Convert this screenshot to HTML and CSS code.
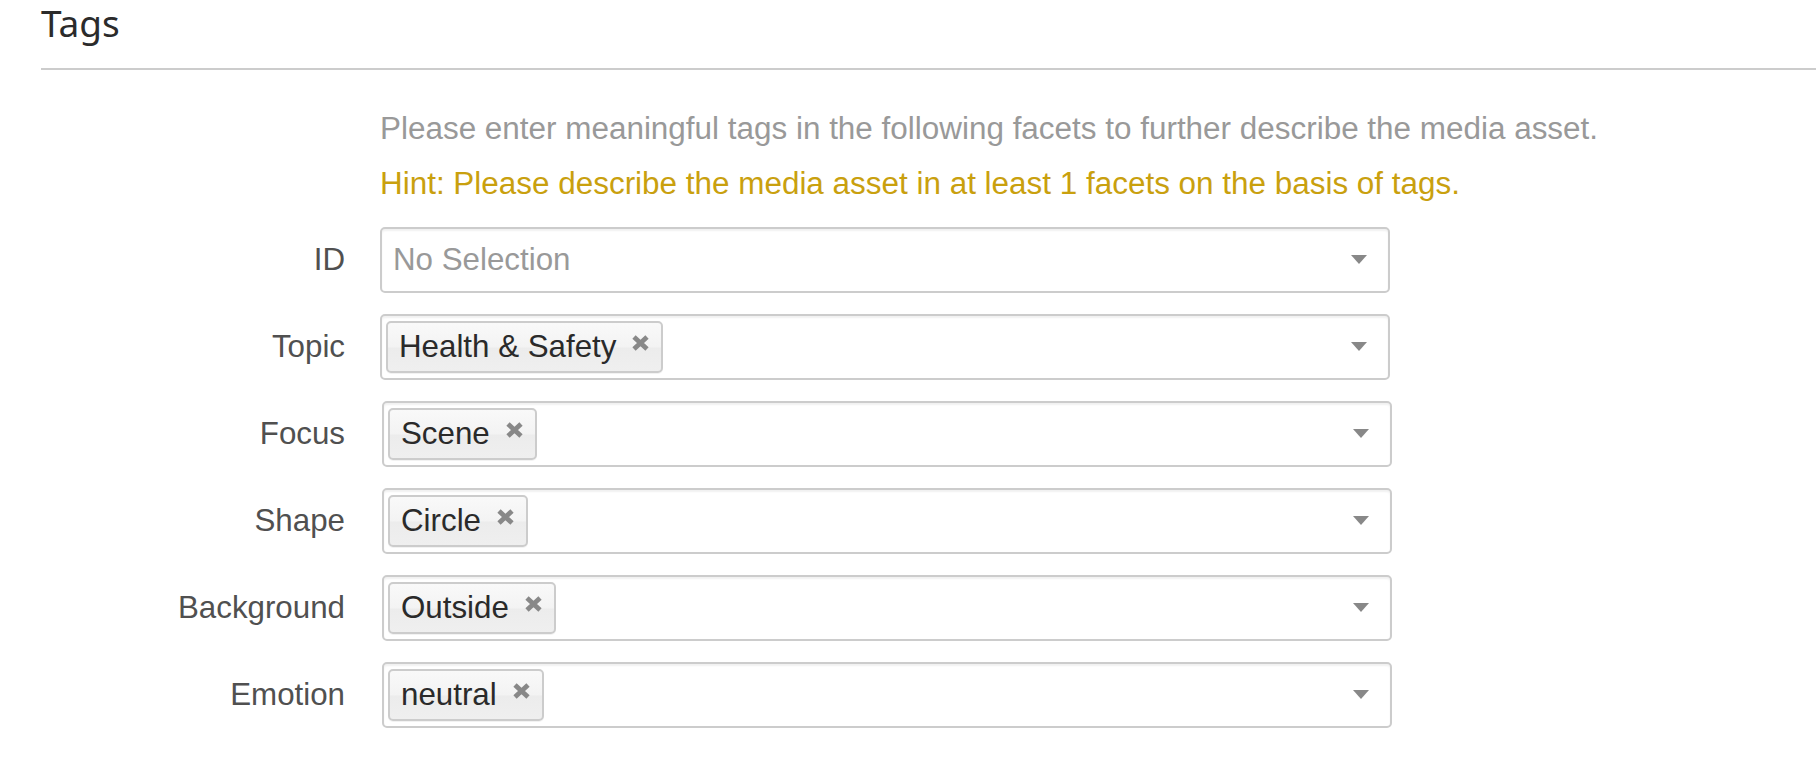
FILE: index.html
```html
<!DOCTYPE html>
<html lang="en">
<head>
<meta charset="utf-8">
<title>Tags</title>
<link rel="stylesheet" href="styles.css">
</head>
<body>
<div class="page">
  <div class="section-title">Tags</div>
  <div class="form">
    <p class="intro">Please enter meaningful tags in the following facets to further describe the media asset.</p>
    <p class="hint">Hint: Please describe the media asset in at least 1 facets on the basis of tags.</p>

    <div class="row">
      <label class="lbl">ID</label>
      <div class="sel">
        <span class="placeholder">No Selection</span>
        <span class="caret"></span>
      </div>
    </div>

    <div class="row">
      <label class="lbl">Topic</label>
      <div class="sel">
        <span class="tag">Health &amp; Safety<svg class="x" viewBox="0 0 17 16" width="17" height="16"><path d="M2 2 L15 14 M15 2 L2 14"/></svg></span>
        <span class="caret"></span>
      </div>
    </div>

    <div class="row">
      <label class="lbl">Focus</label>
      <div class="sel shift">
        <span class="tag">Scene<svg class="x" viewBox="0 0 17 16" width="17" height="16"><path d="M2 2 L15 14 M15 2 L2 14"/></svg></span>
        <span class="caret"></span>
      </div>
    </div>

    <div class="row">
      <label class="lbl">Shape</label>
      <div class="sel shift">
        <span class="tag">Circle<svg class="x" viewBox="0 0 17 16" width="17" height="16"><path d="M2 2 L15 14 M15 2 L2 14"/></svg></span>
        <span class="caret"></span>
      </div>
    </div>

    <div class="row">
      <label class="lbl">Background</label>
      <div class="sel shift">
        <span class="tag">Outside<svg class="x" viewBox="0 0 17 16" width="17" height="16"><path d="M2 2 L15 14 M15 2 L2 14"/></svg></span>
        <span class="caret"></span>
      </div>
    </div>

    <div class="row">
      <label class="lbl">Emotion</label>
      <div class="sel shift">
        <span class="tag">neutral<svg class="x" viewBox="0 0 17 16" width="17" height="16"><path d="M2 2 L15 14 M15 2 L2 14"/></svg></span>
        <span class="caret"></span>
      </div>
    </div>
  </div>
</div>
</body>
</html>
```

FILE: styles.css
```css
html, body {
  margin: 0;
  padding: 0;
  background: #ffffff;
}

body {
  font-family: "Liberation Sans", Arial, sans-serif;
  font-size: 31.3px;
  color: #333333;
  overflow: hidden;
}

.page {
  padding-left: 41px;
}

.section-title {
  font-family: "Noto Sans", "Open Sans", sans-serif;
  font-size: 37px;
  line-height: 44px;
  color: #2b2b2b;
  padding: 1px 0 23px 0;
  border-bottom: 2px solid #cccccc;
}

.form {
  padding-top: 31px;
}

.intro,
.hint {
  margin: 0;
  padding-left: 339px;
  font-size: 31.45px;
  line-height: 55.3px;
  white-space: nowrap;
}

.intro {
  color: #999999;
}

.hint {
  color: #c9a00e;
}

.row {
  display: flex;
  align-items: center;
  gap: 35px;
  margin-top: 21px;
}

.hint + .row {
  margin-top: 15px;
}

.lbl {
  width: 304px;
  text-align: right;
  color: #505050;
  flex: none;
}

.sel {
  box-sizing: border-box;
  width: 1010px;
  height: 66px;
  border: 2px solid #cccccc;
  border-radius: 5px;
  box-shadow: inset 0 2px 2px rgba(0, 0, 0, 0.06);
  display: flex;
  align-items: center;
  background: #ffffff;
}

.sel.shift {
  margin-left: 2px;
}

.placeholder {
  color: #999999;
  padding-left: 11px;
}

.tag {
  box-sizing: border-box;
  height: 52px;
  margin-left: 4px;
  padding: 0 12px 0 11px;
  display: inline-flex;
  align-items: center;
  gap: 16px;
  border: 2px solid #cccccc;
  border-radius: 5px;
  background: linear-gradient(to bottom, #f9f9f9 0%, #f3f3f3 50%, #ececec 52%, #efefef 100%);
  box-shadow: 0 1px 0 rgba(0, 0, 0, 0.05);
  color: #2a2a2a;
  white-space: nowrap;
}

.x {
  display: block;
  margin-top: -8px;
  overflow: visible;
}

.x path {
  stroke: #888888;
  stroke-width: 4.8;
  fill: none;
}

.caret {
  width: 0;
  height: 0;
  margin-left: auto;
  margin-right: 21px;
  border-left: 8.5px solid transparent;
  border-right: 8.5px solid transparent;
  border-top: 9px solid #888888;
}
```
